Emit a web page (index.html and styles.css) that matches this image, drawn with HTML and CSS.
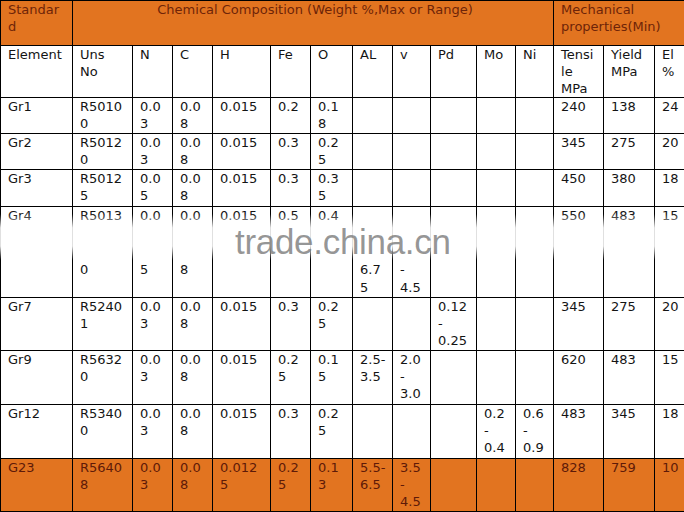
FILE: index.html
```html
<!DOCTYPE html>
<html>
<head>
<meta charset="utf-8">
<link rel="stylesheet" href="styles.css">
</head>
<body>
<div class="sheet">
<table class="spec">
<colgroup>
<col class="w72"><col class="w60"><col class="w40"><col class="w40"><col class="w58"><col class="w40"><col class="w42"><col class="w40"><col class="w38"><col class="w46"><col class="w39"><col class="w38"><col class="w50"><col class="w51"><col class="w30">
</colgroup>
<tr class="head">
<td>Standar<br>d</td>
<td colspan="11" class="center">Chemical Composition (Weight %,Max or Range)</td>
<td colspan="3">Mechanical<br>properties(Min)</td>
</tr>
<tr>
<td>Element</td><td>Uns<br>No</td><td>N</td><td>C</td><td>H</td><td>Fe</td><td>O</td><td>AL</td><td>v</td><td>Pd</td><td>Mo</td><td>Ni</td><td>Tensi<br>le<br>MPa</td><td>Yield<br>MPa</td><td>El<br>%</td>
</tr>
<tr>
<td>Gr1</td><td>R5010<br>0</td><td>0.0<br>3</td><td>0.0<br>8</td><td>0.015</td><td>0.2</td><td>0.1<br>8</td><td></td><td></td><td></td><td></td><td></td><td>240</td><td>138</td><td>24</td>
</tr>
<tr>
<td>Gr2</td><td>R5012<br>0</td><td>0.0<br>3</td><td>0.0<br>8</td><td>0.015</td><td>0.3</td><td>0.2<br>5</td><td></td><td></td><td></td><td></td><td></td><td>345</td><td>275</td><td>20</td>
</tr>
<tr>
<td>Gr3</td><td>R5012<br>5</td><td>0.0<br>5</td><td>0.0<br>8</td><td>0.015</td><td>0.3</td><td>0.3<br>5</td><td></td><td></td><td></td><td></td><td></td><td>450</td><td>380</td><td>18</td>
</tr>
<tr class="tall">
<td>Gr4</td><td>R5013<br><br><br>0</td><td>0.0<br><br><br>5</td><td>0.0<br><br><br>8</td><td>0.015</td><td>0.5</td><td>0.4</td><td><br><br><br>6.7<br>5</td><td><br><br><br>-<br>4.5</td><td></td><td></td><td></td><td>550</td><td>483</td><td>15</td>
</tr>
<tr>
<td>Gr7</td><td>R5240<br>1</td><td>0.0<br>3</td><td>0.0<br>8</td><td>0.015</td><td>0.3</td><td>0.2<br>5</td><td></td><td></td><td>0.12<br>-<br>0.25</td><td></td><td></td><td>345</td><td>275</td><td>20</td>
</tr>
<tr>
<td>Gr9</td><td>R5632<br>0</td><td>0.0<br>3</td><td>0.0<br>8</td><td>0.015</td><td>0.2<br>5</td><td>0.1<br>5</td><td>2.5-<br>3.5</td><td>2.0<br>-<br>3.0</td><td></td><td></td><td></td><td>620</td><td>483</td><td>15</td>
</tr>
<tr>
<td>Gr12</td><td>R5340<br>0</td><td>0.0<br>3</td><td>0.0<br>8</td><td>0.015</td><td>0.3</td><td>0.2<br>5</td><td></td><td></td><td></td><td>0.2<br>-<br>0.4</td><td>0.6<br>-<br>0.9</td><td>483</td><td>345</td><td>18</td>
</tr>
<tr class="hl">
<td>G23</td><td>R5640<br>8</td><td>0.0<br>3</td><td>0.0<br>8</td><td>0.012<br>5</td><td>0.2<br>5</td><td>0.1<br>3</td><td>5.5-<br>6.5</td><td>3.5<br>-<br>4.5</td><td></td><td></td><td></td><td>828</td><td>759</td><td>10</td>
</tr>
</table>
<div class="band"></div>
<div class="mark">trade.china.cn</div>
</div>
</body>
</html>
```

FILE: styles.css
```css
html, body {
  margin: 0;
  padding: 0;
  background: #fff;
}
.sheet {
  position: relative;
  width: 684px;
  height: 512px;
  overflow: hidden;
}
.spec {
  border-collapse: collapse;
  table-layout: fixed;
  width: 684px;
  font-family: "DejaVu Sans", Verdana, sans-serif;
  font-size: 13px;
  line-height: 17px;
  color: #141414;
}
.spec td {
  border: 1px solid #000;
  padding: 0 3px 0 7px;
  vertical-align: top;
  text-align: left;
  white-space: nowrap;
  overflow: hidden;
}
.w72 { width: 72px; }
.w60 { width: 60px; }
.w58 { width: 58px; }
.w51 { width: 51px; }
.w50 { width: 50px; }
.w46 { width: 46px; }
.w42 { width: 42px; }
.w40 { width: 40px; }
.w39 { width: 39px; }
.w38 { width: 38px; }
.w30 { width: 30px; }

.spec tr:nth-child(1) { height: 45px; }
.spec tr:nth-child(2) { height: 52px; }
.spec tr:nth-child(3) { height: 36px; }
.spec tr:nth-child(4) { height: 36px; }
.spec tr:nth-child(5) { height: 37px; }
.spec tr:nth-child(6) { height: 91px; }
.spec tr:nth-child(7) { height: 53px; }
.spec tr:nth-child(8) { height: 54px; }
.spec tr:nth-child(9) { height: 54px; }
.spec tr:nth-child(10) { height: 53px; }

.spec tr.tall td {
  line-height: 18px;
}
.spec tr.head td {
  background: #e27420;
  color: #6e2408;
}
.spec tr.head td.center {
  text-align: center;
}
.spec tr.hl td {
  background: #e27420;
  color: #5e1a08;
}

.band {
  position: absolute;
  left: 0;
  top: 214px;
  width: 684px;
  height: 46px;
  background: linear-gradient(to bottom, rgba(255,255,255,0) 0%, rgba(255,255,255,0.88) 30%, rgba(255,255,255,0.88) 70%, rgba(255,255,255,0) 100%);
}
.mark {
  position: absolute;
  left: 235px;
  top: 227px;
  font-family: "Liberation Sans", Arial, sans-serif;
  font-size: 35px;
  line-height: 30px;
  color: rgba(110,110,110,0.72);
  letter-spacing: -0.3px;
}
```
